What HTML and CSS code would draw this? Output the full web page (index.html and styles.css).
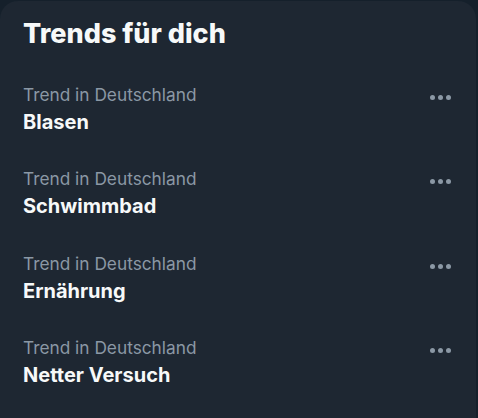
FILE: index.html
```html
<!DOCTYPE html>
<html lang="de">
<head>
    <meta charset="UTF-8">
    <meta name="viewport" content="width=device-width, initial-scale=1.0">
    <title>Trends</title>
    <link rel="stylesheet" href="styles.css">
</head>
<body>
    <!-- Trends Box -->
    <section class="trends-box">
        <h2>Trends für dich</h2>

        <div class="trend">
            <div class="trend-text">
                <span class="trend-meta">Trend in Deutschland</span>
                <span class="trend-name">Blasen</span>
            </div>
            <span class="trend-more"><i></i><i></i><i></i></span>
        </div>

        <div class="trend">
            <div class="trend-text">
                <span class="trend-meta">Trend in Deutschland</span>
                <span class="trend-name">Schwimmbad</span>
            </div>
            <span class="trend-more"><i></i><i></i><i></i></span>
        </div>

        <div class="trend">
            <div class="trend-text">
                <span class="trend-meta">Trend in Deutschland</span>
                <span class="trend-name">Ernährung</span>
            </div>
            <span class="trend-more"><i></i><i></i><i></i></span>
        </div>

        <div class="trend">
            <div class="trend-text">
                <span class="trend-meta">Trend in Deutschland</span>
                <span class="trend-name">Netter Versuch</span>
            </div>
            <span class="trend-more"><i></i><i></i><i></i></span>
        </div>
    </section>
</body>
</html>
```

FILE: styles.css
```css
* {
    margin: 0;
    padding: 0;
    box-sizing: border-box;
}

body {
    font-family: Inter, "Noto Sans", sans-serif;
    background-color: #15202b;
    height: 418px;
    overflow: hidden;
    padding: 1px 2px 0 0;
}

.trends-box {
    background-color: #1e2732;
    border-radius: 18px 18px 0 0;
    height: 100%;
    color: #f7f9f9;
}

.trends-box h2 {
    font-size: 27px;
    font-weight: 800;
    line-height: 34px;
    padding: 16px 23px 21px;
}

.trend {
    display: flex;
    justify-content: space-between;
    align-items: flex-start;
    padding: 11px 23px 0;
    height: 84.3px;
}

.trend-text {
    display: flex;
    flex-direction: column;
}

.trend-meta {
    font-size: 17.3px;
    line-height: 24px;
    color: #8b98a5;
}

.trend-name {
    font-size: 20px;
    font-weight: 700;
    line-height: 30px;
}

.trend-more {
    display: flex;
    gap: 3px;
    padding: 12px 2px 0 0;
}

.trend-more i {
    width: 5px;
    height: 5px;
    border-radius: 50%;
    background-color: #8b98a5;
}
```
